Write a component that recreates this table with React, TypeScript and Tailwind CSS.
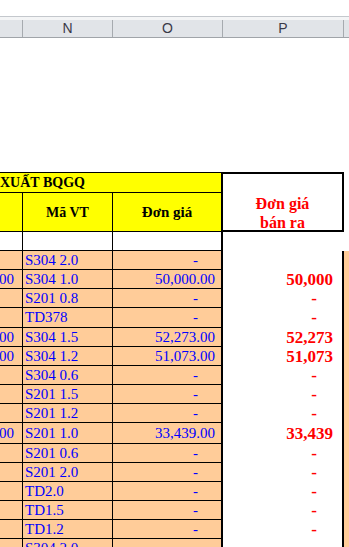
import React from "react";

type Row = {
  code: string;
  m?: string;
  price?: string;
  sale?: string;
  h: string;
};

// "" in sale = blank cell, undefined price = accounting dash
const rows: Row[] = [
  { code: "S304 2.0", sale: "", h: "h-[19px]" },
  { code: "S304 1.0", m: "00", price: "50,000.00", sale: "50,000", h: "h-[19px]" },
  { code: "S201 0.8", sale: "-", h: "h-[19px]" },
  { code: "TD378", sale: "-", h: "h-[20px]" },
  { code: "S304 1.5", m: "00", price: "52,273.00", sale: "52,273", h: "h-[19px]" },
  { code: "S304 1.2", m: "00", price: "51,073.00", sale: "51,073", h: "h-[19px]" },
  { code: "S304 0.6", sale: "-", h: "h-[19px]" },
  { code: "S201 1.5", sale: "-", h: "h-[19px]" },
  { code: "S201 1.2", sale: "-", h: "h-[19px]" },
  { code: "S201 1.0", m: "00", price: "33,439.00", sale: "33,439", h: "h-[21px]" },
  { code: "S201 0.6", sale: "-", h: "h-[19px]" },
  { code: "S201 2.0", sale: "-", h: "h-[19px]" },
  { code: "TD2.0", sale: "-", h: "h-[19px]" },
  { code: "TD1.5", sale: "-", h: "h-[19px]" },
  { code: "TD1.2", sale: "-", h: "h-[19px]" },
  { code: "S304 2.0", sale: "", h: "h-[19px]" },
];

const serif = { fontFamily: '"Liberation Serif", "Times New Roman", serif' };

const DataRow: React.FC<{ row: Row }> = ({ row }) => (
  <div className={`flex shrink-0 ${row.h}`}>
    <div className="w-[23px] shrink-0 flex items-center justify-end whitespace-nowrap pr-[8px] border-r border-b border-black bg-[#ffcc99] text-[15px] text-[#0000ff]">
      {row.m}
    </div>
    <div className="w-[90px] shrink-0 flex items-center pl-[2px] whitespace-nowrap border-r border-b border-black bg-[#ffcc99] text-[15px] text-[#0000ff]">
      {row.code}
    </div>
    <div
      className={`w-[110px] shrink-0 flex items-center justify-end whitespace-nowrap border-r-2 border-b border-black bg-[#ffcc99] text-[15px] text-[#0000ff] ${
        row.price ? "pr-[6px]" : "pr-[23px]"
      }`}
    >
      {row.price ?? "-"}
    </div>
    <div
      className={`w-[121px] shrink-0 flex items-center justify-end whitespace-nowrap border-r-2 border-black bg-white text-[17px] font-bold text-[#ff0000] ${
        row.sale === "-" ? "pr-[25px]" : "pr-[9px]"
      }`}
    >
      {row.sale}
    </div>
    <div className="flex-1 bg-[#ffcc99]" />
  </div>
);

export default function App() {
  return (
    <div className="w-[349px] h-[547px] overflow-hidden bg-white flex flex-col" style={serif}>
      {/* sheet column header */}
      <div className="h-[16px] shrink-0" />
      <div className="h-px shrink-0 bg-[#c4c8cd]" />
      <div className="h-[3px] shrink-0 bg-[#f4f5f6]" />
      <div
        className="h-[18px] shrink-0 flex bg-[#e1e4e8] border-b border-[#a0a4a9] text-[14px] text-[#3a3a48]"
        style={{ fontFamily: '"Liberation Sans", Arial, sans-serif' }}
      >
        <div className="w-[23px] shrink-0 border-r border-[#a6aaaf]" />
        <div className="w-[90px] shrink-0 border-r border-[#a6aaaf] flex items-center justify-center">N</div>
        <div className="w-[110px] shrink-0 border-r border-[#a6aaaf] flex items-center justify-center">O</div>
        <div className="w-[121px] shrink-0 border-r border-[#a6aaaf] flex items-center justify-center">P</div>
        <div className="flex-1" />
      </div>
      <div className="h-[134px] shrink-0" />

      {/* table heading */}
      <div className="h-[60px] shrink-0 flex">
        <div className="w-[221px] shrink-0 flex flex-col">
          <div className="h-[21px] shrink-0 flex items-center border-t border-b border-black bg-[#ffff00] text-[14px] font-bold text-black whitespace-nowrap">
            XUẤT BQGQ
          </div>
          <div className="h-[39px] shrink-0 flex border-b border-black bg-[#ffff00] text-[14px] font-bold text-black">
            <div className="w-[23px] shrink-0 border-r border-black" />
            <div className="w-[90px] shrink-0 border-r border-black flex items-center justify-center">Mã VT</div>
            <div className="flex-1 flex items-center justify-center text-[15px]">Đơn giá</div>
          </div>
        </div>
        <div className="w-[123px] shrink-0 border-2 border-black flex flex-col items-center justify-start pt-[20px] text-[16px] leading-[19px] font-bold text-[#ff0000]">
          <span>Đơn giá</span>
          <span>bán ra</span>
        </div>
        <div className="flex-1" />
      </div>

      {/* blank row */}
      <div className="h-[19px] shrink-0 flex">
        <div className="w-[23px] shrink-0 border-r border-b border-black" />
        <div className="w-[90px] shrink-0 border-r border-b border-black" />
        <div className="w-[110px] shrink-0 border-r-2 border-b border-black" />
        <div className="flex-1" />
      </div>

      {rows.map((r, i) => (
        <DataRow key={i} row={r} />
      ))}
    </div>
  );
}
